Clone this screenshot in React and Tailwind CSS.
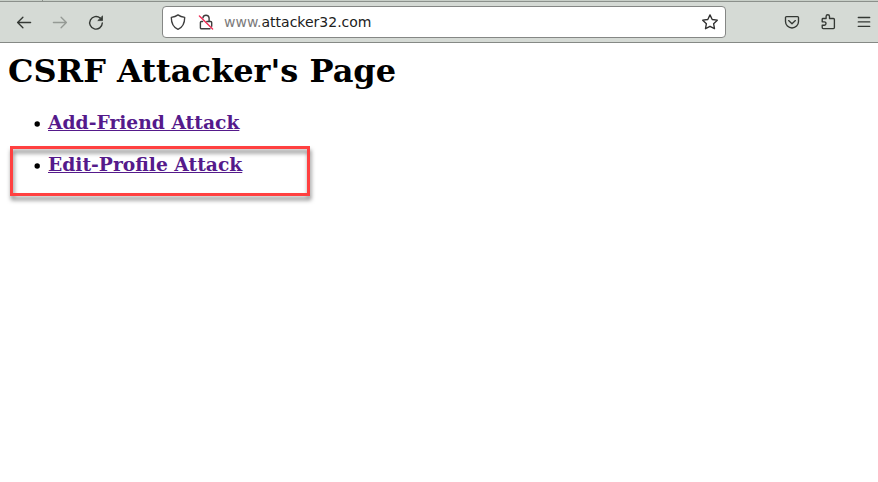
const stroke = {
  fill: "none",
  stroke: "currentColor",
  strokeWidth: 1.35,
  strokeLinecap: "round",
  strokeLinejoin: "round",
};

function Icon({ children, className = "" }) {
  return (
    <svg width="16" height="16" viewBox="0 0 16 16" className={`shrink-0 overflow-visible ${className}`} {...stroke}>
      {children}
    </svg>
  );
}

function Toolbar() {
  return (
    <header className="flex h-[43px] flex-col border-b border-[#858985] bg-[#d5dad5] text-[#343834]">
      <div className="flex h-[2px] shrink-0 border-b border-[#8b908b] bg-[#c8cfc8]">
        <span className="ml-[42px] w-px bg-[#8b908b]" />
      </div>
      <div className="flex h-10 items-center pl-4">
        <nav className="flex gap-5">
          <Icon><path d="M14.6 8.5H1.6M6.9 3.2L1.6 8.5l5.3 5.3" /></Icon>
          <Icon className="text-[#959a95]"><path d="M1.4 8.5h13M9.1 3.2l5.3 5.3-5.3 5.3" /></Icon>
          <Icon>
            <path d="M12.2 4.1A6.3 6.3 0 1 0 14.3 9" strokeWidth="1.4" />
            <path d="M14.5 2.3v4.3h-4.3z" fill="currentColor" strokeWidth="0.8" />
          </Icon>
        </nav>
        <div className="ml-[58px] flex h-8 w-[564px] items-center rounded-[4px] border border-[#858785] bg-white pl-[7px] pr-[7px]">
          <Icon className="text-[#3d3d3d]">
            <path d="M8 .9C6 2.5 3.8 3.2 1.3 3.4c0 5.6 1.4 9.5 6.7 11.9 5.3-2.4 6.7-6.3 6.7-11.9C12.2 3.2 10 2.5 8 .9z" />
          </Icon>
          <Icon className="ml-3 text-[#3d3d3d]">
            <path d="M4.9 3.9a3.15 3.15 0 0 1 6.2 0v3.6M8.8 7.5h3.9a1 1 0 0 1 1 1v3.8M12 14.7H3.4a1 1 0 0 1-1-1V8.5a1 1 0 0 1 1-1h1.2" strokeWidth="1.4" />
            <path d="M1.4 1.9l13.2 13.2" stroke="#f03058" strokeWidth="1.4" />
          </Icon>
          <span className="ml-[10px] flex-1 whitespace-nowrap font-['DejaVu_Sans',sans-serif] text-[14px] leading-none text-[#202020]">
            <span className="text-[#7b7b7b]">www.</span>attacker32.com
          </span>
          <Icon className="text-[#303030]">
            <path d="M8 .9l2.2 4.6 5.1.7-3.7 3.5.9 5L8 12.3l-4.5 2.4.9-5L.7 6.2l5.1-.7z" />
          </Icon>
        </div>
        <nav className="ml-[58px] flex gap-5">
          <Icon>
            <path d="M2.5 2.6h11a1 1 0 0 1 1 1V7.5a6.5 6.5 0 0 1-13 0V3.6a1 1 0 0 1 1-1z" />
            <path d="M4.6 6.6L8 9.8l3.4-3.2" />
          </Icon>
          <Icon>
            <path d="M3 4.5h3.1V2.4a1.7 1.7 0 0 1 3.4 0v2.1h3.9a1 1 0 0 1 1 1v8.1a1 1 0 0 1-1 1H3.2a1 1 0 0 1-1-1v-2.4h2.1a1.7 1.7 0 0 0 0-3.4H2.2V5.3a.8.8 0 0 1 .8-.8z" />
          </Icon>
          <Icon><path d="M2.3 3.5h11.4M2.3 7.9h11.4M2.3 12.4h11.4" /></Icon>
        </nav>
      </div>
    </header>
  );
}

function Attack({ children }) {
  return (
    <li className="flex h-[22px] items-center">
      <svg width="6" height="6" viewBox="0 0 6 6" className="mt-1 mr-2 shrink-0">
        <circle cx="3.2" cy="3" r="2.7" />
      </svg>
      <h3 className="text-[18.72px] font-bold leading-[22px]">
        <a href="#" className="text-[#551a8b] underline">{children}</a>
      </h3>
    </li>
  );
}

export default function App() {
  return (
    <div className="relative h-[482px] w-[878px] overflow-hidden bg-white font-['DejaVu_Serif',serif] text-black">
      <Toolbar />
      <main className="px-2 pt-[9px]">
        <h1 className="text-[32px] font-bold leading-[38px]">CSRF Attacker's Page</h1>
        <ul className="mt-[21px] flex flex-col gap-5 pl-[26px]">
          <Attack>Add-Friend Attack</Attack>
          <Attack>Edit-Profile Attack</Attack>
        </ul>
      </main>
      <div className="pointer-events-none absolute left-[10px] top-[146px] h-[50px] w-[300px] border-[3px] border-[#ff4040] drop-shadow-[1px_4px_2px_rgba(0,0,0,0.5)]" />
    </div>
  );
}
